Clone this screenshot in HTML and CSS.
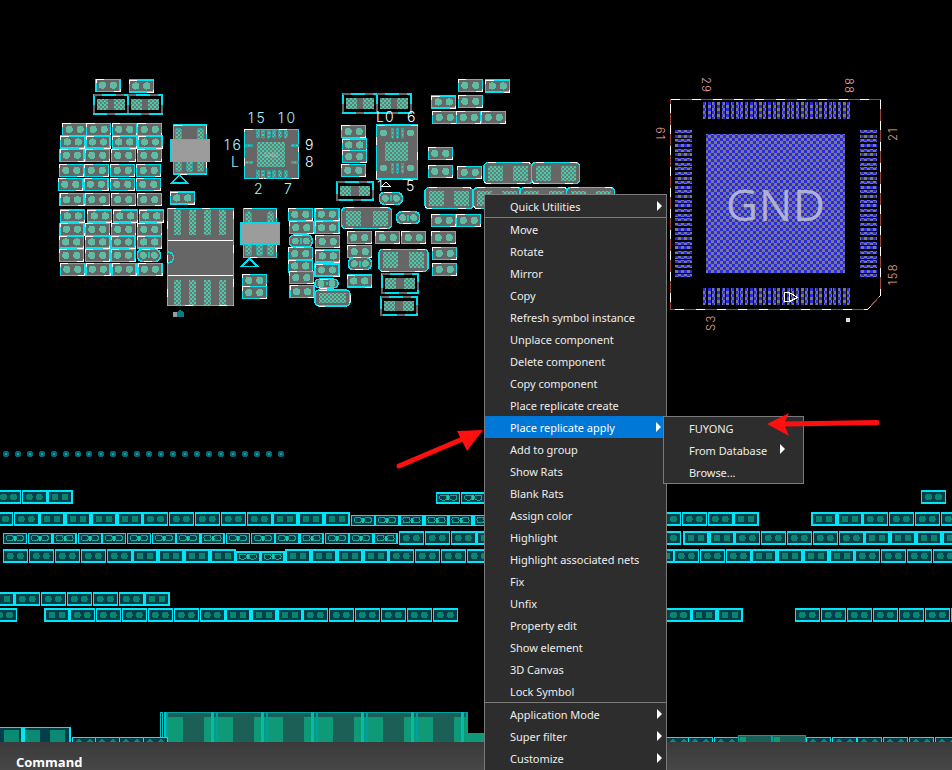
FILE: index.html
```html
<!DOCTYPE html>
<html lang="en">
<head>
<meta charset="utf-8">
<title>PCB layout context menu</title>
<link rel="stylesheet" href="styles.css">
</head>
<body>
<div class="app">
  <main class="canvas">
    <svg class="board" id="board" width="952" height="742" viewBox="0 0 952 742" xmlns="http://www.w3.org/2000/svg">
      <defs>
        <pattern id="chk-green" width="4" height="4" patternUnits="userSpaceOnUse">
          <rect width="4" height="4" fill="#747878"/>
          <rect width="2" height="2" fill="#3fd0aa"/>
          <rect x="2" y="2" width="2" height="2" fill="#3fd0aa"/>
        </pattern>
        <pattern id="chk-blue" width="6" height="6" patternUnits="userSpaceOnUse">
          <rect width="6" height="6" fill="#7a7a86"/>
          <rect width="3" height="3" fill="#2a2ae0"/>
          <rect x="3" y="3" width="3" height="3" fill="#2a2ae0"/>
        </pattern>
      </defs>
      <g id="pads"></g>
      <text class="tiny" x="271" y="157">GND</text>
      <g class="lbl-cyan">
        <text x="248" y="123">15</text>
        <text x="278" y="123">10</text>
        <text x="224" y="150">16</text>
        <text x="231" y="167">L</text>
        <text x="254" y="194">2</text>
        <text x="284" y="194">7</text>
      </g>
      <g class="lbl-white">
        <text x="305" y="150">9</text>
        <text x="305" y="167">8</text>
        <text x="376" y="122">L</text>
        <text x="385" y="122">0</text>
        <text x="407" y="122">6</text>
        <text x="377" y="191">1</text>
        <text x="406" y="191">5</text>
      </g>
      <text class="gnd" x="776" y="221">GND</text>
      <g class="lbl-pin">
        <text transform="translate(702,77) rotate(90)">29</text>
        <text transform="translate(845,78) rotate(90)">88</text>
        <text transform="translate(656,127) rotate(90)">61</text>
        <text transform="translate(897,141) rotate(-90)">21</text>
        <text transform="translate(897,285) rotate(-90)">158</text>
        <text transform="translate(715,331) rotate(-90)">S3</text>
      </g>
    </svg>
  </main>
  <footer class="command"><span class="command-title">Command</span></footer>
</div>

<nav class="menu menu-main">
  <div class="item has-sub">Quick Utilities</div>
  <div class="sep"></div>
  <div class="item">Move</div>
  <div class="item">Rotate</div>
  <div class="item">Mirror</div>
  <div class="item">Copy</div>
  <div class="item">Refresh symbol instance</div>
  <div class="item">Unplace component</div>
  <div class="item">Delete component</div>
  <div class="item">Copy component</div>
  <div class="item">Place replicate create</div>
  <div class="item has-sub active">Place replicate apply</div>
  <div class="item">Add to group</div>
  <div class="item">Show Rats</div>
  <div class="item">Blank Rats</div>
  <div class="item">Assign color</div>
  <div class="item">Highlight</div>
  <div class="item">Highlight associated nets</div>
  <div class="item">Fix</div>
  <div class="item">Unfix</div>
  <div class="item">Property edit</div>
  <div class="item">Show element</div>
  <div class="item">3D Canvas</div>
  <div class="item">Lock Symbol</div>
  <div class="sep"></div>
  <div class="item has-sub">Application Mode</div>
  <div class="item has-sub">Super filter</div>
  <div class="item has-sub">Customize</div>
</nav>

<nav class="menu menu-sub">
  <div class="item">FUYONG</div>
  <div class="item has-sub">From Database</div>
  <div class="item">Browse...</div>
</nav>

<svg class="arrows" width="952" height="770" viewBox="0 0 952 770" xmlns="http://www.w3.org/2000/svg">
  <line class="arrow-shaft" x1="399" y1="466" x2="465" y2="438"/>
  <polygon class="arrow-head" points="483,430 457,431 467,451"/>
  <line class="arrow-shaft" x1="877" y1="422.5" x2="785" y2="424"/>
  <polygon class="arrow-head" points="767,424 789,413 784,424 789,436"/>
</svg>

<script src="board.js"></script>
</body>
</html>
```
FILE: styles.css
```css
* { box-sizing: border-box; }
html, body { margin: 0; height: 100%; background: #000; overflow: hidden; }
.app { display: flex; flex-direction: column; height: 770px; overflow: hidden; }
.canvas { flex: 1; min-height: 0; background: #000; }
.board { display: block; shape-rendering: crispEdges; }

.command {
  height: 28px;
  padding: 13px 0 0 16px;
  background: linear-gradient(#3a3a3a, #474747);
  color: #fff;
  font: 700 13px/15px "Open Sans", "Noto Sans", sans-serif;
}
.command-title { display: block; }

.menu {
  position: absolute;
  background: #2d2d2d;
  border: 1px solid #7a7a7a;
  color: #ececec;
  font: 11px/22px "Noto Sans", "Open Sans", sans-serif;
}
.menu-main { left: 484px; top: 194px; width: 183px; height: 590px; }
.menu-sub { left: 663px; top: 416px; width: 141px; height: 68px; padding-top: 1px; }
.item { position: relative; height: 22px; padding-left: 25px; white-space: nowrap; letter-spacing: -0.04px; }
.menu-main .item { line-height: 24px; }
.item.active { background: #0078d7; color: #fff; margin-right: 2px; }
.has-sub::after {
  content: "";
  position: absolute;
  right: 4px;
  top: 6px;
  border-style: solid;
  border-width: 5px 0 5px 5px;
  border-color: transparent transparent transparent #fff;
}
.menu-main .active::after { right: 3px; }
.menu-sub .has-sub::after { right: 18px; top: 4px; }
.sep { height: 1px; background: #7a7a7a; }

.arrows { position: absolute; left: 0; top: 0; pointer-events: none; }
.arrow-shaft { stroke: #ff0f0f; stroke-width: 5; stroke-linecap: round; }
.arrow-head { fill: #ff0f0f; }

/* board primitives */
.p-gray { fill: #666; stroke: #00e4f0; stroke-width: 1.5; }
.p-dash { fill: none; stroke: #fff; stroke-width: 1; stroke-dasharray: 8 26; }
.blob { fill: #5fbca2; }
.p-teal { fill: #023e4c; stroke: #00e6f6; stroke-width: 1.5; }
.blob-teal { fill: #0a8670; }
.cup { fill: none; stroke: #12a88c; stroke-width: 1; }
.bar { fill: #18c8bc; }
.dark-frame { fill: #000; stroke: #00e0ec; stroke-width: 2; }
.dark-dash { fill: none; stroke: #666; stroke-width: 2; stroke-dasharray: 8 14; }
.gray { fill: #666; }
.light { fill: #9c9c9c; stroke: #00d8e8; stroke-width: 1; }
.chk { fill: url(#chk-green); }
.pin { fill: url(#chk-green); stroke: #2ca6a6; stroke-width: 1; }
.tri { fill: none; stroke: #00e0ec; stroke-width: 1.5; }
.white-line { stroke: #fff; stroke-width: 1; fill: none; }
.edge-line { stroke: #00c4c4; stroke-width: 1; fill: none; }
.dot { fill: #006874; }
.dot-core { fill: #00a4b0; }
.big-fill { fill: #1c5f56; stroke: #00a0a0; stroke-width: 1.5; }
.big-pad { fill: #0e9a76; }
.big-edge { fill: #00bca8; }
.tile-dark { fill: #023e4c; stroke: #00e6f6; stroke-width: 1; }
.tile-green { fill: #0a8a72; }
.outline { fill: none; stroke: #9c4a38; stroke-width: 1; }
.outline-dash { fill: none; stroke: #fff; stroke-width: 1; stroke-dasharray: 9 12; }
.pin-blue { fill: url(#chk-blue); }
.core-blue { fill: url(#chk-blue); }
.ic-white { fill: none; stroke: #fff; stroke-width: 1; }
.wdot { fill: #ddd; }
.ic-teal { fill: #007f86; }
.ic-gray { fill: #9a9a9a; }

.gnd {
  fill: #c0c0d8;
  fill-opacity: .85;
  font: 400 44px "Open Sans", sans-serif;
  letter-spacing: 1px;
  text-anchor: middle;
}
.tiny { fill: #b0b8b4; font: 6px "DejaVu Sans", sans-serif; text-anchor: middle; }
.lbl-cyan text, .lbl-white text, .lbl-pin text { font-family: Inter, sans-serif; font-weight: 300; }
.lbl-cyan { fill: #a8f6ff; font-size: 14px; letter-spacing: 3px; }
.lbl-white { fill: #fff; font-size: 14px; }
.lbl-pin { fill: #f0a898; font-size: 11px; letter-spacing: 1.5px; }
```
FILE: board.js
```js
// Builds the PCB canvas: every part is placed from a coordinate list.
const NS = "http://www.w3.org/2000/svg";
const root = document.getElementById("pads");
function el(tag, cls, attrs) {
  const n = document.createElementNS(NS, tag);
  if (cls) n.setAttribute("class", cls);
  for (const k in attrs) n.setAttribute(k, attrs[k]);
  root.appendChild(n);
  return n;
}
const rect = (cls, x, y, w, h, rx) => el("rect", cls, rx ? { x, y, width: w, height: h, rx } : { x, y, width: w, height: h });
const circ = (cls, cx, cy, r) => el("circle", cls, { cx, cy, r });
const poly = (cls, pts) => el("polygon", cls, { points: pts });

function pad(x, y, w = 24, h = 12) {
  rect("p-gray", x, y, w, h);
  rect("p-dash", x, y, w, h);
  circ("blob", x + 6.5, y + h / 2, 3.6);
  circ("blob", x + w - 6.5, y + h / 2, 3.6);
}
function oval(x, y, w = 23, h = 12) {
  rect("p-gray", x, y, w, h, 5);
  rect("p-dash", x, y, w, h, 5);
  circ("blob", x + 6, y + h / 2, 3.4);
  circ("blob", x + w - 6, y + h / 2, 3.4);
  rect("bar", x + w / 2 - 1, y + 3, 2, h - 6);
}
function bigpad(x, y, w, h) {
  rect("p-gray", x, y, w, h, 4);
  rect("p-dash", x, y, w, h, 4);
  rect("chk", x + 4, y + 3, 15, h - 6);
  rect("chk", x + w - 19, y + 3, 15, h - 6);
}
function dbl(x, y, w = 34, h = 19) {
  rect("dark-frame", x, y, w, h);
  rect("dark-dash", x, y, w, h);
  rect("gray", x + 3, y + 4, w - 6, h - 8);
  rect("chk", x + 3, y + 4, 11, h - 8);
  rect("chk", x + w - 14, y + 4, 11, h - 8);
}
function sot(x, y) {
  rect("p-gray", x, y, 33, 49);
  rect("p-dash", x, y, 33, 49);
  [5, 27].forEach(d => rect("pin", x + d - 3, y + 3, 6, 12, 3));
  [5, 16, 27].forEach(d => rect("pin", x + d - 3, y + 35, 6, 12, 3));
  rect("light", x - 3, y + 14, 39, 22);
  poly("tri", `${x - 2},${y + 58} ${x + 6},${y + 50} ${x + 14},${y + 58}`);
}
function teal(x, y, w = 24, h = 12) {
  rect("p-teal", x, y, w, h);
  circ("blob-teal", x + 7, y + h / 2, 3.4);
  circ("blob-teal", x + w - 7, y + h / 2, 3.4);
}
function tealVar(x, y, w = 23, h = 10) {
  rect("p-teal", x, y, w, h);
  rect("cup", x + 3, y + 2, 7, 5, 2);
  rect("cup", x + w - 10, y + 2, 7, 5, 2);
  rect("bar", x + w / 2 - 1, y + 2, 2, 5);
}

// Gray SMD pads, upper-left cluster (grid coordinates at 3x, origin 50,70)
const a = (x, y) => [50 + x / 3, 70 + y / 3];
[[138,28],[238,30],
 [38,160],[110,160],[187,160],[263,160],[32,198],[108,198],[187,198],[264,198],
 [30,238],[106,238],[184,238],[262,238],[28,283],[104,283],[182,283],[260,283],
 [25,325],[102,325],[181,325],[259,325],[30,371],[106,371],[184,371],[262,371],
 [32,420],[113,420],[190,420],[268,420],[30,460],[106,460],[184,460],[262,460],
 [28,498],[106,498],[183,498],[262,498],[28,538],[106,538],[183,538],
 [31,580],[108,580],[186,580],[264,580],[361,366],[577,613],[577,650]
].forEach(p => pad(...a(...p)));
oval(...a(262, 538));
dbl(93.5, 94.5);
dbl(127.5, 94.5);
sot(173.5, 125);
sot(243.5, 208.5);

// Big module
rect("p-gray", 167.5, 208.5, 66, 97);
rect("p-dash", 167.5, 208.5, 66, 97);
[174, 189, 204, 219].forEach(x => {
  rect("chk", x, 210, 7, 25);
  rect("chk", x, 280, 7, 25);
});
el("line", "white-line", { x1: 168, y1: 240, x2: 233, y2: 240 });
el("line", "white-line", { x1: 168, y1: 275, x2: 233, y2: 275 });
el("path", "tri", { d: "M168,252 a5,5 0 0 1 0,11" });
rect("ic-gray", 173, 312, 5, 5);
poly("ic-teal", "177,312 180,310 184,312 184,317 177,317");

// QFN parts
rect("p-gray", 244.5, 129.5, 54, 49);
rect("p-dash", 244.5, 129.5, 54, 49);
rect("chk", 257, 142, 28, 25);
[256.5, 261.5, 267, 272.5, 278, 284].forEach(x => {
  rect("pin", x, 130, 3, 8, 1);
  rect("pin", x, 170, 3, 8, 1);
});
[144, 161].forEach(y => {
  rect("pin", 245, y, 7, 2);
  rect("pin", 291, y, 7, 2);
});
rect("p-gray", 376.5, 125, 41, 54);
rect("p-dash", 376.5, 125, 41, 54);
rect("chk", 385, 142, 23, 19);
[383.5, 410.5].forEach(x => {
  circ("blob", x, 133, 3.4);
  circ("blob", x, 168, 3.4);
});
[391, 396, 401].forEach(x => {
  rect("pin", x, 128, 2.5, 10, 1);
  rect("pin", x, 163, 2.5, 10, 1);
});
poly("ic-white", "382,186 386,182 390,186");

// Gray SMD pads, middle cluster (origin 280,70)
const b = (x, y) => [280 + x / 3, 70 + y / 3];
[[535,28],[617,30],[455,78],[535,76],[458,124],[530,124],[605,124],
 [185,167],[187,207],[187,242],[184,283],[445,232],[445,286],[533,289],
 [455,433],[530,433],[25,415],[105,415],[28,455],[105,455],[107,497],
 [25,533],[107,540],[25,570],[105,582],[28,605],[30,647],
 [202,485],[287,485],[365,485],[455,485],[203,527],[458,532],[458,580],[202,615]
].forEach(p => pad(...b(...p)));
[[298,367],[350,425],[28,495],[205,563]].forEach(p => oval(...b(...p)));
oval(...b(105, 627), 23, 9);
dbl(...b(188, 73));
dbl(...b(290, 73));
dbl(...b(170, 335), 36, 18);
dbl(...b(305, 613), 36, 19);
dbl(...b(302, 680), 36, 18);
bigpad(...b(612, 278), 48, 21);
bigpad(...b(755, 278), 48, 21);
[435, 580, 720, 860].forEach(x => bigpad(...b(x, 353), 48, 21));
bigpad(...b(185, 413), 50, 21);
bigpad(...b(297, 538), 49, 22);
bigpad(...b(105, 660), 35, 16);

// Test-point row
[17,53,89,125,161,197,233,266,302,338,374,410,446,482,518,554,590,626,662,698,734,770,806,842]
  .forEach(x => {
    const c = x / 3;
    poly("dot", `${c - 1.5},451 ${c + 1.5},451 ${c + 3},452.5 ${c + 3},455.5 ${c + 1.5},457 ${c - 1.5},457 ${c - 3},455.5 ${c - 3},452.5`);
    rect("dot-core", c - 1, 453, 2, 2);
  });

// Teal resistor rows (3x coordinates, origin 0,480 on the left and 660,480 on the right)
const rows = {
  491: [-10, 67, 144],
  513: [-34, 43, 120, 198, 276, 354, 431, 508, 586, 664, 742, 819, 897, 975],
  532: [1198, 1276, 1354, 1431],
  550: [10, 88, 166, 244, 322, 399, 477, 555, 633, 858, 936, 1014, 1092, 1168, 1246, 1324, 1402],
  593: [-30, 46, 124, 202, 280, 358, 435],
  609: [-22, 135, 211, 289, 367, 445, 523, 601, 678, 756, 834, 910, 988, 1066, 1144, 1222, 1300]
};
Object.keys(rows).forEach(y => rows[y].forEach(x => teal(x / 3, +y)));
[[1310, 493], [1385, 493]].forEach(([x, y]) => tealVar(x / 3, y));
[1054,1126,1200,1275,1347,1422].forEach(x => tealVar(x / 3, 515.5));
[10,85,159,235,307,382,457,529,603,679,754,826,900,976,1048,1122].forEach(x => tealVar(x / 3, 533.5));
[709, 783].forEach(x => tealVar(x / 3, 552));
const rightRows = {
  491: [785],
  513: [-10, 67, 145, 222, 456, 534, 610, 688, 766, 844],
  532: [-10, 72, 150, 226, 304, 382, 460, 538, 615, 693, 771, 849],
  550: [-30, 43, 121, 199, 276, 354, 432, 510, 586, 664, 742, 820],
  609: [20, 96, 174, 406, 484, 562, 640, 718, 796, 874]
};
Object.keys(rightRows).forEach(y => rightRows[y].forEach(x => teal(660 + x / 3, +y)));

// Bottom edge row, clipped by the command bar
function module(x) {
  rect("big-fill", x, 712.5, 50, 40);
  rect("big-pad", x + 1, 717, 15, 30);
  rect("big-pad", x + 37, 717, 13, 30);
  rect("big-edge", x + 44, 712, 3, 30);
}
rect("edge-line", 160.5, 712.5, 2, 30);
rect("edge-line", 164.5, 712.5, 1, 30);
for (let i = 0; i < 6; i++) module(167 + i * 50);
rect("p-teal", -2, 727.5, 24, 20);
rect("tile-green", 4, 730, 15, 14);
rect("p-teal", 24, 727.5, 46, 20);
rect("tile-green", 25, 730, 15, 14);
rect("tile-green", 50, 730, 15, 14);
function tile(x) {
  rect("tile-dark", x, 737.5, 24, 10);
  poly("tile-green", `${x + 3},742 ${x + 7},738.5 ${x + 11},742`);
  poly("tile-green", `${x + 14},742 ${x + 18},738.5 ${x + 22},742`);
}
[72, 95, 119, 143, 666, 688, 714, 806, 832, 857, 883, 909, 935].forEach(tile);
rect("big-pad", 468, 733, 16, 12);
[738, 772].forEach(x => {
  rect("big-fill", x + 0.5, 735.5, 33, 12);
  rect("big-pad", x + 2, 737, 6, 8);
});

// GND processor
poly("outline", "670.5,99.5 880.5,99.5 880.5,295.5 867.5,309.5 670.5,309.5");
poly("outline-dash", "670.5,99.5 880.5,99.5 880.5,295.5 867.5,309.5 670.5,309.5");
rect("core-blue", 706, 134, 139, 139);
for (let i = 0; i < 32; i++) {
  const p = 703 + i * 4.65;
  rect("pin-blue", p, 102, 3, 17);
  rect("pin-blue", p, 288, 3, 17);
  const q = 130 + i * 4.65;
  rect("pin-blue", 675, q, 17, 3);
  rect("pin-blue", 860, q, 17, 3);
}
poly("ic-white", "784.5,292.5 789.5,292.5 797.5,297.5 789.5,301.5 784.5,301.5");
poly("ic-white", "789.5,292.5 789.5,301.5");
circ("wdot", 848, 320, 2.5);
```
